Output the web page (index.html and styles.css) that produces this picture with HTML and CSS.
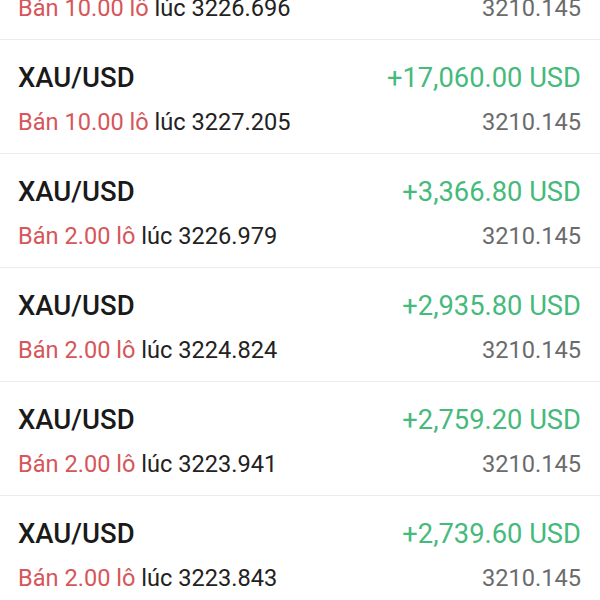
FILE: index.html
```html
<!DOCTYPE html>
<html lang="vi">
<head>
    <meta charset="UTF-8">
    <meta name="viewport" content="width=device-width, initial-scale=1.0">
    <title>Lệnh đã đóng</title>
    <link rel="stylesheet" href="styles.css">
</head>
<body>
    <ul class="trades">
        <li class="trade">
            <div class="line">
                <span class="sym">XAU/USD</span>
                <span class="pnl">+15,090.00 USD</span>
            </div>
            <div class="line">
                <span class="info"><span class="sell">Bán 10.00 lô</span> lúc 3226.696</span>
                <span class="close">3210.145</span>
            </div>
        </li>
        <li class="trade">
            <div class="line">
                <span class="sym">XAU/USD</span>
                <span class="pnl">+17,060.00 USD</span>
            </div>
            <div class="line">
                <span class="info"><span class="sell">Bán 10.00 lô</span> lúc 3227.205</span>
                <span class="close">3210.145</span>
            </div>
        </li>
        <li class="trade">
            <div class="line">
                <span class="sym">XAU/USD</span>
                <span class="pnl">+3,366.80 USD</span>
            </div>
            <div class="line">
                <span class="info"><span class="sell">Bán 2.00 lô</span> lúc 3226.979</span>
                <span class="close">3210.145</span>
            </div>
        </li>
        <li class="trade">
            <div class="line">
                <span class="sym">XAU/USD</span>
                <span class="pnl">+2,935.80 USD</span>
            </div>
            <div class="line">
                <span class="info"><span class="sell">Bán 2.00 lô</span> lúc 3224.824</span>
                <span class="close">3210.145</span>
            </div>
        </li>
        <li class="trade">
            <div class="line">
                <span class="sym">XAU/USD</span>
                <span class="pnl">+2,759.20 USD</span>
            </div>
            <div class="line">
                <span class="info"><span class="sell">Bán 2.00 lô</span> lúc 3223.941</span>
                <span class="close">3210.145</span>
            </div>
        </li>
        <li class="trade">
            <div class="line">
                <span class="sym">XAU/USD</span>
                <span class="pnl">+2,739.60 USD</span>
            </div>
            <div class="line">
                <span class="info"><span class="sell">Bán 2.00 lô</span> lúc 3223.843</span>
                <span class="close">3210.145</span>
            </div>
        </li>
    </ul>
</body>
</html>
```

FILE: styles.css
```css
*{
    margin: 0;
    padding: 0;
}
body{
    background-color: #fff;
    font-family: Roboto, "Noto Sans", sans-serif;
    overflow: hidden;
}
.trades{
    list-style: none;
    /* list is scrolled: first row only shows its bottom line */
    margin-top: -74px;
}
.trade{
    box-sizing: border-box;
    height: 114px;
    padding: 5px 19px 0 18px;
    border-bottom: 1px solid #ececec;
    display: flex;
    flex-direction: column;
    justify-content: center;
    gap: 14px;
}
.line{
    display: flex;
    justify-content: space-between;
    align-items: baseline;
    line-height: 1.15;
}
.sym{
    font-size: 27.5px;
    font-weight: 500;
    color: #1a1a1a;
}
.pnl{
    font-size: 27.3px;
    color: #45ba7c;
}
.info{
    font-size: 23.6px;
    color: #222;
}
.sell{
    color: #d6565a;
}
.close{
    font-size: 23.6px;
    color: #6b6b6b;
}
```
